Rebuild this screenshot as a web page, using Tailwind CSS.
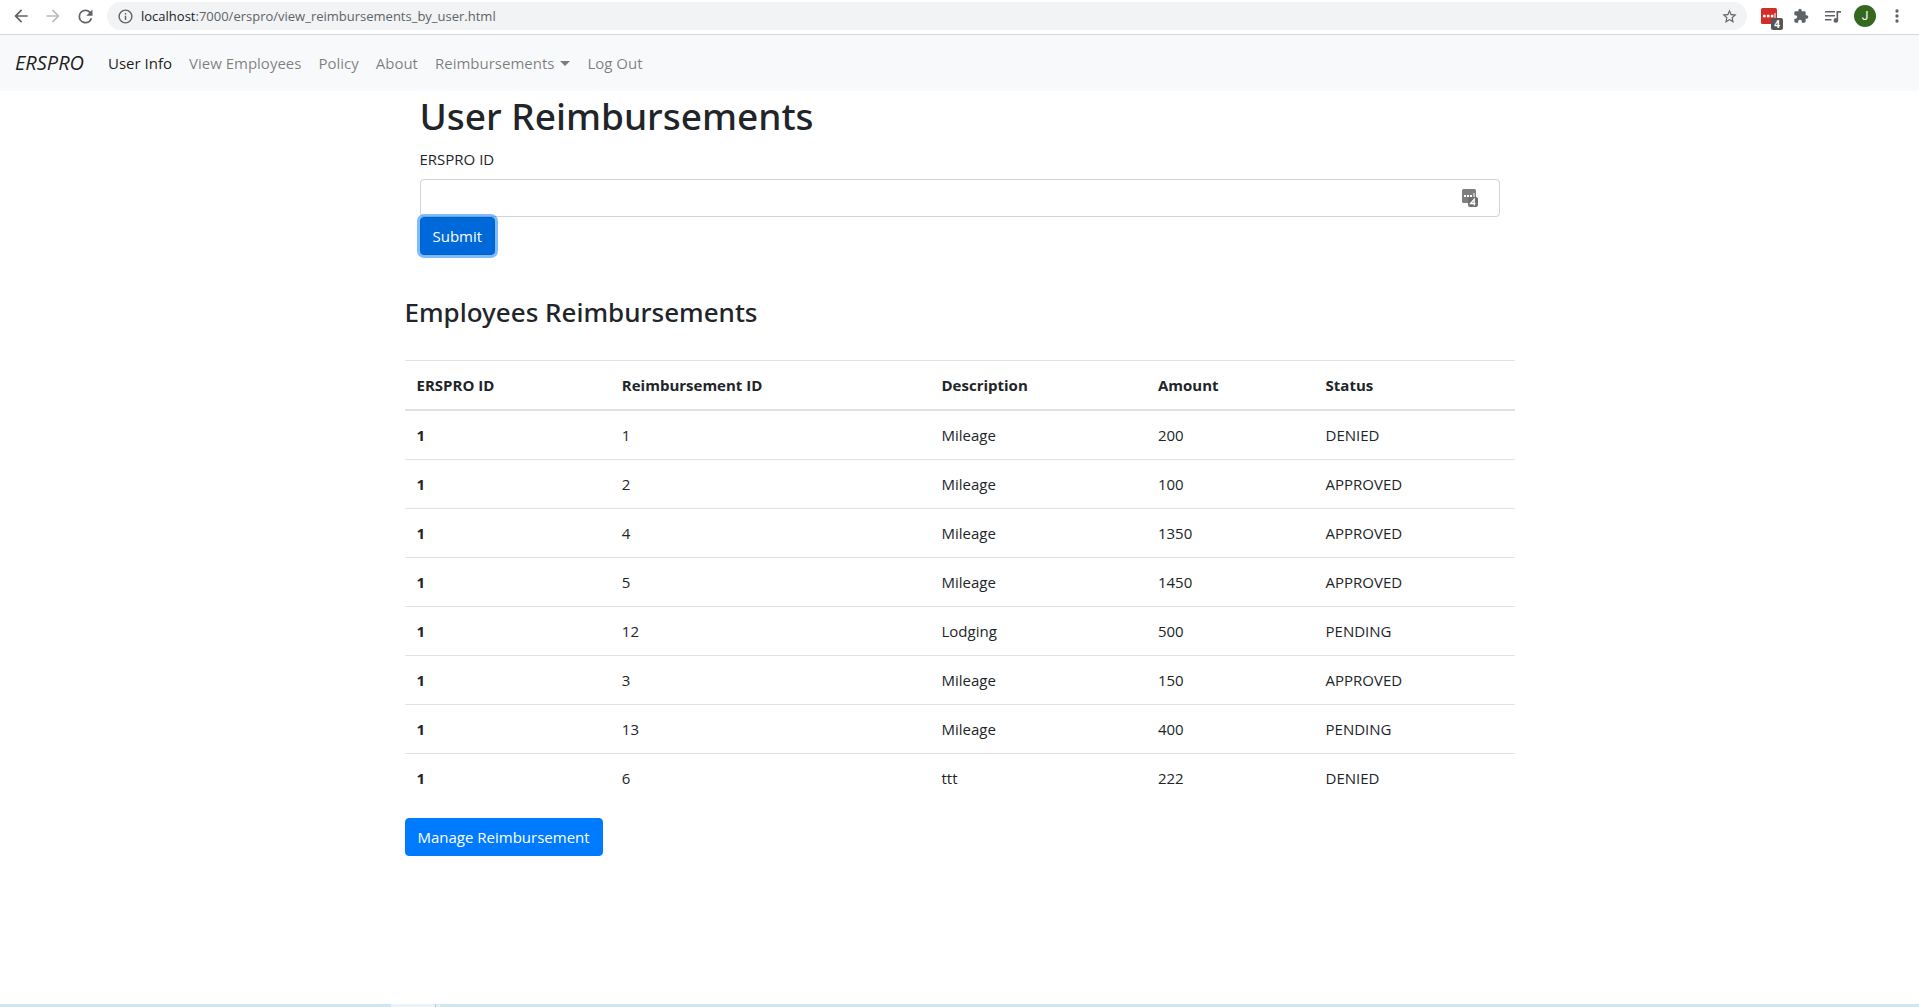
<!DOCTYPE html>
<html lang="en">
<head>
<meta charset="utf-8">
<meta name="viewport" content="width=device-width, initial-scale=1">
<title>User Reimbursements</title>
<script src="https://cdn.jsdelivr.net/npm/@tailwindcss/browser@4"></script>
</head>
<body class="flex min-h-screen flex-col bg-white font-['Open_Sans',sans-serif] text-[15px] leading-6 text-[#212529]">

  <!-- Browser toolbar -->
  <header class="flex items-center gap-[6px] border-b border-[#d5d8dc] px-[5px] pt-[2px] pr-[6px] pb-1 text-[#5f6368]">
    <div class="flex">
      <button type="button" aria-label="Back" class="flex h-7 w-8 items-center justify-center">
        <svg class="size-5" viewBox="0 0 24 24" fill="currentColor"><path d="M20 11H7.83l5.59-5.59L12 4l-8 8 8 8 1.41-1.41L7.83 13H20v-2z"/></svg>
      </button>
      <button type="button" aria-label="Forward" class="flex h-7 w-8 items-center justify-center text-[#babcbe]">
        <svg class="size-5" viewBox="0 0 24 24" fill="currentColor"><path d="M12 4l-1.41 1.41L16.17 11H4v2h12.17l-5.58 5.59L12 20l8-8z"/></svg>
      </button>
      <button type="button" aria-label="Reload" class="flex h-7 w-8 items-center justify-center">
        <svg class="size-[21px]" viewBox="0 0 24 24" fill="currentColor"><path d="M17.65 6.35A7.96 7.96 0 0 0 12 4a8 8 0 1 0 7.73 10h-2.08A6 6 0 1 1 12 6c1.66 0 3.14.69 4.22 1.78L13 11h7V4l-2.35 2.35z"/></svg>
      </button>
    </div>
    <div class="flex h-7 flex-1 items-center rounded-full bg-[#f1f3f4] pl-[10px] pr-[9px]">
      <svg class="mr-[7px] size-[17px]" viewBox="0 0 24 24" fill="currentColor"><path d="M11 7h2v2h-2zm0 4h2v6h-2zm1-9a10 10 0 1 0 0 20 10 10 0 0 0 0-20zm0 18a8 8 0 1 1 0-16 8 8 0 0 1 0 16z"/></svg>
      <span class="flex-1 text-[13px]"><span class="text-[#202124]">localhost</span>:7000/erspro/view_reimbursements_by_user.html</span>
      <button type="button" aria-label="Bookmark this page">
        <svg class="size-[17px]" viewBox="0 0 24 24" fill="currentColor"><path d="M22 9.24l-7.19-.62L12 2 9.19 8.63 2 9.24l5.46 4.73L5.82 21 12 17.27 18.18 21l-1.63-7.03L22 9.24zM12 15.4l-3.76 2.27 1-4.28-3.32-2.88 4.38-.38L12 6.1l1.71 4.04 4.38.38-3.32 2.88 1 4.28L12 15.4z"/></svg>
      </button>
    </div>
    <div class="flex">
      <button type="button" aria-label="Password manager" class="relative flex h-7 w-8 items-center justify-center">
        <svg class="size-4" viewBox="0 0 16 16"><rect width="16" height="16" rx="1.5" fill="#d32d27"/><circle cx="3.3" cy="8" r="1.5" fill="#fff"/><circle cx="7.2" cy="8" r="1.5" fill="#fff"/><circle cx="11.1" cy="8" r="1.5" fill="#fff"/><path d="M14 5v6" stroke="#fff"/></svg>
        <span class="absolute top-4 left-[18px] h-3 w-3 rounded-[2px] bg-[#555] text-center text-[10px] leading-3 font-bold text-white">4</span>
      </button>
      <button type="button" aria-label="Extensions" class="flex h-7 w-8 items-center justify-center">
        <svg class="size-4" viewBox="0 0 24 24" fill="currentColor"><path d="M20.5 11H19V7c0-1.1-.9-2-2-2h-4V3.500a2.500 2.500 0 0 0-5 0V5H4c-1.1 0-1.990.9-1.990 2v3.800H3.500c1.490 0 2.700 1.210 2.700 2.700s-1.210 2.700-2.700 2.700H2V20c0 1.100.9 2 2 2h3.800v-1.500c0-1.490 1.210-2.700 2.700-2.700s2.700 1.210 2.700 2.700V22H17c1.100 0 2-.9 2-2v-4h1.500a2.500 2.500 0 0 0 0-5z"/></svg>
      </button>
      <button type="button" aria-label="Media controls" class="flex h-7 w-8 items-center justify-center">
        <svg class="h-[13px] w-4" viewBox="0 0 16 13" fill="currentColor"><path d="M0 1h10v1.500H0zM0 5h10v1.500H0zM0 9h6.500v1.500H0zM11.500 1H16v1.700h-2.800V10.400a2.300 2.300 0 1 1-1.700-2.200z"/></svg>
      </button>
      <button type="button" aria-label="Profile" class="flex h-7 w-8 items-center justify-center">
        <span class="size-[22px] rounded-full bg-[#33691e] text-center font-[Roboto,sans-serif] text-xs leading-[22px] text-white">J</span>
      </button>
      <button type="button" aria-label="Menu" class="flex h-7 w-8 items-center justify-center">
        <svg class="size-5" viewBox="0 0 24 24" fill="currentColor"><path d="M12 8a2 2 0 1 0 0-4 2 2 0 0 0 0 4zm0 2a2 2 0 1 0 0 4 2 2 0 0 0 0-4zm0 6a2 2 0 1 0 0 4 2 2 0 0 0 0-4z"/></svg>
      </button>
    </div>
  </header>

  <nav class="flex h-14 items-center gap-[17px] bg-[#f8f9fa] px-[15px] text-black/50">
    <a href="#" class="mr-[7px] text-xl text-black/90 italic">ERSPRO</a>
    <a href="#" class="text-black/90">User Info</a>
    <a href="#">View Employees</a>
    <a href="#">Policy</a>
    <a href="#">About</a>
    <a href="#" class="flex items-center gap-[6px]">Reimbursements
      <svg class="h-[5px] w-[10px]" viewBox="0 0 10 5" fill="currentColor"><path d="M0 0h10L5 5z"/></svg>
    </a>
    <a href="#">Log Out</a>
  </nav>

  <main class="mx-auto w-full max-w-[1140px] flex-1 px-[15px]">
    <form class="px-[15px]">
      <h1 class="pt-px mb-[7px] font-['Noto_Sans',sans-serif] text-[37px] leading-[48px] font-medium">User Reimbursements</h1>
      <label for="user-id" class="mb-2 block">ERSPRO ID</label>
      <div class="relative">
        <input id="user-id" type="text" class="block h-[38px] w-full rounded border border-[#ced4da] px-3">
        <svg class="absolute top-[10px] right-[22px] h-[18px] w-4" viewBox="0 0 16 18"><rect width="14" height="14" rx="1.500" fill="#7f7f7f"/><path d="M2 6h2v2H2zM5 6h2v2H5zM8 6h2v2H8zM11.500 4h1v4h-1z" fill="#fff"/><rect x="6" y="8" width="10" height="10" rx="2" fill="#6f6f6f"/><path d="M12.200 16.500v-6.200l-3.700 4.200h5" fill="none" stroke="#fff" stroke-width="1.300"/></svg>
      </div>
      <button type="button" class="relative block h-[38px] rounded border border-[#0062cc] bg-[#0069d9] px-3 text-white ring-3 ring-[#007bff]/50">Submit</button>
    </form>

    <h2 class="mt-[39px] mb-[29px] font-['Noto_Sans',sans-serif] text-[26px] leading-[37px] font-medium">Employees Reimbursements</h2>

    <table class="mb-4 w-full table-fixed border-collapse text-left">
      <colgroup>
        <col class="w-[18.5%]"><col class="w-[28.8%]"><col class="w-[19.5%]"><col class="w-[15.1%]"><col class="w-[18.1%]">
      </colgroup>
      <thead>
        <tr class="border-t border-b-2 border-[#dee2e6]">
          <th scope="col" class="p-3">ERSPRO ID</th><th scope="col" class="p-3">Reimbursement ID</th><th scope="col" class="p-3">Description</th><th scope="col" class="p-3">Amount</th><th scope="col" class="p-3">Status</th>
        </tr>
      </thead>
      <tbody class="divide-y divide-[#dee2e6]">
        <tr><th scope="row" class="p-3">1</th><td class="p-3">1</td><td class="p-3">Mileage</td><td class="p-3">200</td><td class="p-3">DENIED</td></tr>
        <tr><th scope="row" class="p-3">1</th><td class="p-3">2</td><td class="p-3">Mileage</td><td class="p-3">100</td><td class="p-3">APPROVED</td></tr>
        <tr><th scope="row" class="p-3">1</th><td class="p-3">4</td><td class="p-3">Mileage</td><td class="p-3">1350</td><td class="p-3">APPROVED</td></tr>
        <tr><th scope="row" class="p-3">1</th><td class="p-3">5</td><td class="p-3">Mileage</td><td class="p-3">1450</td><td class="p-3">APPROVED</td></tr>
        <tr><th scope="row" class="p-3">1</th><td class="p-3">12</td><td class="p-3">Lodging</td><td class="p-3">500</td><td class="p-3">PENDING</td></tr>
        <tr><th scope="row" class="p-3">1</th><td class="p-3">3</td><td class="p-3">Mileage</td><td class="p-3">150</td><td class="p-3">APPROVED</td></tr>
        <tr><th scope="row" class="p-3">1</th><td class="p-3">13</td><td class="p-3">Mileage</td><td class="p-3">400</td><td class="p-3">PENDING</td></tr>
        <tr><th scope="row" class="p-3">1</th><td class="p-3">6</td><td class="p-3">ttt</td><td class="p-3">222</td><td class="p-3">DENIED</td></tr>
      </tbody>
    </table>
    <button type="button" class="h-[38px] rounded border border-[#007bff] bg-[#007bff] px-3 text-white">Manage Reimbursement</button>
  </main>

  <!-- Top edge of the taskbar -->
  <footer class="flex h-[3px] bg-[#cfe7ee]">
    <div class="ml-[391px] w-[44px] bg-[#eaf4f8]"></div>
    <div class="w-px bg-[#a9cdd3]"></div>
    <div class="w-1 bg-[#e0eff4]"></div>
  </footer>
</body>
</html>
